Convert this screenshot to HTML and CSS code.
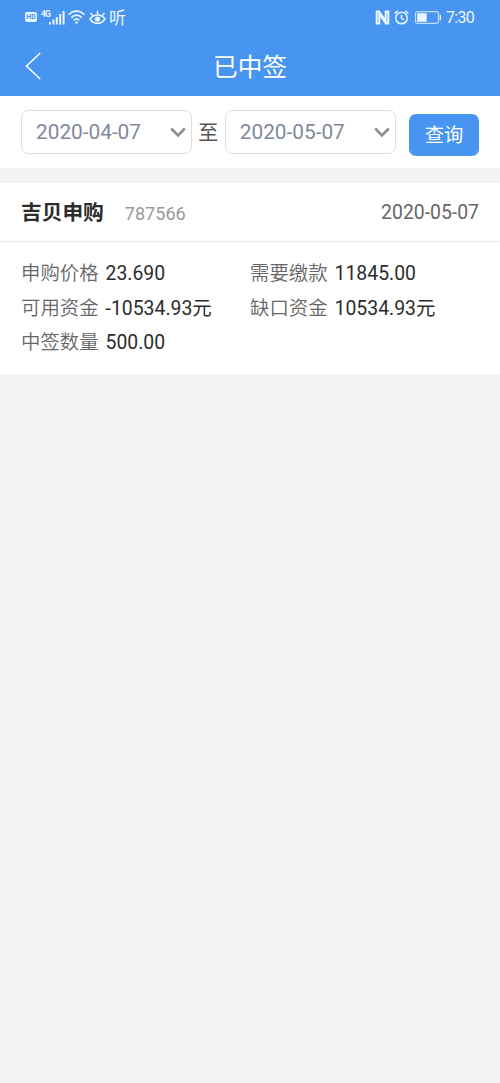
FILE: index.html
```html
<!DOCTYPE html>
<html lang="zh-CN">
<head>
<meta charset="utf-8">
<title>已中签</title>
<link rel="stylesheet" href="styles.css">
</head>
<body>
<header class="top">
  <div class="status">
    <div class="status-left">
      <span class="hd">HD</span>
      <span class="net">4G</span>
      <svg class="signal" width="16" height="15" viewBox="0 0 16 15" fill="currentColor"><path d="M0 12h1.800v2.500H0zM3.400 9.500h2v5h-2zM6.800 7h2v7.500h-2zM10.200 4h2v10.500h-2zM13.600 1h2v13.500h-2z"/></svg>
      <svg class="wifi" width="17" height="14" viewBox="0 0 17 14" fill="none" stroke="currentColor" stroke-width="1.600"><path d="M.7 4.800C5-.1 12-.1 16.300 4.800M3.300 7.600c3-3.300 7.400-3.300 10.400 0M5.700 10.200c1.700-1.800 3.900-1.800 5.600 0"/><circle cx="8.500" cy="12.500" r="1.200" fill="currentColor" stroke="none"/></svg>
      <svg class="eye" width="17" height="15" viewBox="0 0 17 15" fill="none" stroke="currentColor" stroke-width="1.500"><path d="M1 9C5 3.800 12 3.800 16 9 12 14.800 5 14.800 1 9zM8.500 4.500V.8M4 5.800 1.500 3M13 5.800 15.500 3"/><circle cx="8.500" cy="9" r="2.600" fill="currentColor" stroke="none"/></svg>
      <span class="listen">听</span>
    </div>
    <div class="status-right">
      <svg class="nfc" width="15" height="15" viewBox="0 0 15 15" fill="none" stroke="currentColor"><path d="M5 1.400H1.700v12.200h2.600V3.200l6.400 8.600V1.400h2.600v12.200H10" stroke-width="2"/><path d="M4.500 1.500l6.200 8.500M4.300 5l6.200 8.500" stroke-width="1.200"/></svg>
      <svg class="alarm" width="15" height="15" viewBox="0 0 15 15" fill="none" stroke="currentColor" stroke-width="1.500"><circle cx="7.500" cy="8" r="5.800"/><path d="M.7 3.400 3.800.8M14.300 3.400 11.200.8M7.500 4.800v3.500l2.300 1.500"/></svg>
      <svg class="battery" width="27" height="13" viewBox="0 0 27 13"><rect x=".6" y=".6" width="22.800" height="11.800" rx="1.800" fill="none" stroke="currentColor" stroke-width="1.200" opacity=".75"/><path d="M2.200 2.200h9.500v8.600H2.200zM24.600 3.800H26v5.400h-1.400z" fill="currentColor"/></svg>
      <span class="clock">7:30</span>
    </div>
  </div>
  <nav class="nav">
    <svg class="back" width="17" height="28" viewBox="0 0 17 28" fill="none" stroke="currentColor" stroke-width="1.500"><path d="M15.200 1 1.500 14l13.700 13"/></svg>
    <h1 class="title">已中签</h1>
  </nav>
</header>

<section class="filter">
  <div class="date"><span>2020-04-07</span><svg width="16" height="11" viewBox="0 0 16 11" fill="none" stroke="#8e8e8e" stroke-width="2.600"><path d="m1.200 1.500 6.800 7 6.800-7"/></svg></div>
  <span class="to">至</span>
  <div class="date"><span>2020-05-07</span><svg width="16" height="11" viewBox="0 0 16 11" fill="none" stroke="#8e8e8e" stroke-width="2.600"><path d="m1.200 1.500 6.800 7 6.800-7"/></svg></div>
  <button class="query">查询</button>
</section>

<article class="card">
  <div class="card-head">
    <h2 class="name">吉贝申购</h2>
    <span class="code">787566</span>
    <time class="day">2020-05-07</time>
  </div>
  <div class="details">
    <div class="item"><span class="label">申购价格</span><span class="value">23.690</span></div>
    <div class="item"><span class="label">需要缴款</span><span class="value">11845.00</span></div>
    <div class="item"><span class="label">可用资金</span><span class="value">-10534.93元</span></div>
    <div class="item"><span class="label">缺口资金</span><span class="value">10534.93元</span></div>
    <div class="item"><span class="label">中签数量</span><span class="value">500.00</span></div>
  </div>
</article>
</body>
</html>
```
FILE: styles.css
```css
* { box-sizing: border-box; }

body {
  margin: 0;
  min-height: 1083px;
  background: #f3f4f6;
  color: #2c2c2c;
  font-family: Roboto, "Noto Sans CJK SC", sans-serif;
}

svg { display: block; flex: none; }

.top {
  height: 96px;
  background: #4894f1;
  color: #fff;
}

.status {
  display: flex;
  justify-content: space-between;
  height: 36px;
  padding: 0 26px 0 25px;
  color: #e9f6ff;
}

.status-left,
.status-right {
  display: flex;
  align-items: center;
  height: 34px;
}

.hd {
  width: 12px;
  height: 10px;
  border-radius: 2px;
  background: #e9f6ff;
  color: #4894f1;
  font-size: 7px;
  font-weight: 700;
  line-height: 10px;
  text-align: center;
}

.net {
  width: 8px;
  margin: 0 0 7px 4px;
  font-size: 8.500px;
  font-weight: 700;
  line-height: 8px;
  letter-spacing: -.8px;
}

.wifi { margin-left: 3px; }
.eye { margin-left: 4px; }

.listen {
  margin-left: 3px;
  font-size: 17px;
  line-height: 20px;
  padding-top: 2px;
}

.alarm { margin-left: 4px; }
.battery { margin-left: 6px; }

.clock {
  width: 28px;
  margin-left: 4px;
  padding-top: 1px;
  font-size: 16px;
  line-height: 20px;
  letter-spacing: -.7px;
  white-space: nowrap;
}

.nav {
  display: grid;
  grid-template-columns: 60px 1fr 60px;
  align-items: center;
  height: 60px;
}

.back { margin-left: 25px; }

.title {
  margin: 0;
  padding-top: 3px;
  font-size: 24.700px;
  font-weight: 400;
  line-height: 36px;
  text-align: center;
}

.filter {
  display: flex;
  align-items: flex-start;
  height: 87px;
  padding: 14px 21px 0;
  border-bottom: 15px solid #f3f3f4;
  background: #fff;
}

.date {
  display: flex;
  align-items: center;
  justify-content: space-between;
  width: 171px;
  height: 44px;
  padding: 0 5px 0 14px;
  border: 1px solid #dedede;
  border-radius: 7px;
  color: #7e8a99;
  font-size: 20.800px;
}

.to {
  width: 33px;
  color: #555;
  font-size: 20px;
  line-height: 46px;
  text-align: center;
}

.query {
  width: 70px;
  height: 42px;
  margin: 3.500px 0 0 13.500px;
  padding: 2px 0 0;
  border: 0;
  border-radius: 7px;
  background: #4894f1;
  color: #fff;
  font: 19.300px/40px Roboto, "Noto Sans CJK SC", sans-serif;
}

.card {
  height: 191px;
  background: #fff;
}

.card-head {
  display: flex;
  align-items: center;
  height: 59px;
  padding: 0 21px;
  border-bottom: 1px solid #e8e8ea;
}

.name {
  margin: 0;
  padding-top: 2px;
  font-size: 20.700px;
  font-weight: 700;
  line-height: 30px;
}

.code {
  margin: 3px 0 0 21px;
  color: #999;
  font-size: 18.100px;
}

.day {
  margin-left: auto;
  color: #666;
  font-size: 19.400px;
}

.details {
  display: grid;
  grid-template-columns: 229px 1fr;
  grid-auto-rows: 34.700px;
  padding: 14.500px 21px 0;
}

.item {
  display: flex;
  align-items: center;
  gap: 7px;
  font-size: 19.400px;
  line-height: 34px;
  white-space: nowrap;
}

.label {
  color: #666;
  font-weight: 350;
}
```
